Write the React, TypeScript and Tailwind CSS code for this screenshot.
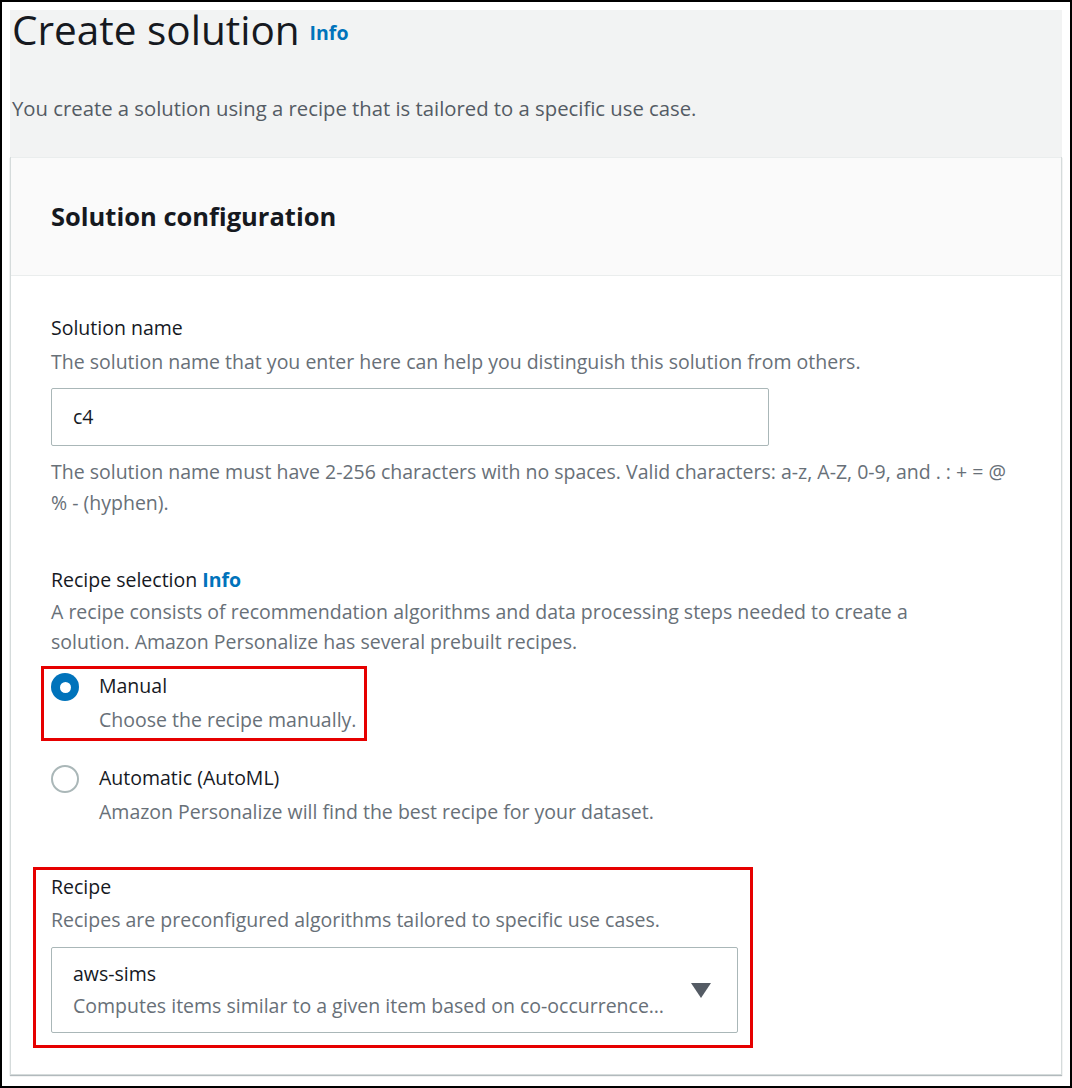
const font = { fontFamily: '"Open Sans", "Liberation Sans", sans-serif' };

const RadioOption = ({ checked, label, hint }: { checked: boolean; label: string; hint: string }) => (
  <div className="flex gap-[20px]">
    <div className="pt-[4px]">
      {checked ? (
        <div className="flex h-[28px] w-[28px] items-center justify-center rounded-full bg-[#0073bb]">
          <div className="h-[11px] w-[11px] rounded-full bg-white" />
        </div>
      ) : (
        <div className="h-[28px] w-[28px] rounded-full border-2 border-[#aab7b8] bg-white" />
      )}
    </div>
    <div className="flex flex-col">
      <span className="text-[19.5px] leading-[34px] text-[#16191f]">{label}</span>
      <span className="text-[19.5px] leading-[33px] text-[#687078]">{hint}</span>
    </div>
  </div>
);

export default function App() {
  return (
    <div style={font} className="box-border h-[1088px] w-[1072px] overflow-hidden border-2 border-black bg-white p-2">
      <div className="flex h-[147px] flex-col bg-[#f2f3f3] pl-[2px]">
        <div className="-mt-[8px] flex items-center gap-[10px]">
          <h1 className="text-[40.5px] leading-[56px] font-normal text-[#16191f]">Create solution</h1>
          <a className="pt-[6px] text-[19.5px] font-bold text-[#0073bb]">Info</a>
        </div>
        <p className="mt-[36px] text-[20.3px] leading-[28px] text-[#545b64]">
          You create a solution using a recipe that is tailored to a specific use case.
        </p>
      </div>

      <section className="h-[918px] border-r border-l border-b border-[#d5dbdb] bg-white shadow-[0_1px_1px_rgba(0,28,36,0.3)]">
        <div className="flex h-[119px] items-center border-t border-b border-[#eaeded] bg-[#fafafa] px-[40px]">
          <h2 className="text-[25.5px] font-bold text-[#16191f]">Solution configuration</h2>
        </div>

        <div className="flex flex-col px-[40px] pt-[35px]">
          <div className="flex flex-col">
            <label className="text-[19.5px] leading-[34px] text-[#16191f]">Solution name</label>
            <span className="text-[19.5px] leading-[34px] text-[#687078]">
              The solution name that you enter here can help you distinguish this solution from others.
            </span>
            <div className="mt-[9px] flex h-[58px] w-[718px] items-center rounded-[2px] border border-[#aab7b8] px-[21px] text-[19.5px] text-[#16191f]">
              c4
            </div>
            <p className="mt-[10px] text-[19.5px] leading-[31px] text-[#687078]">
              The solution name must have 2-256 characters with no spaces. Valid characters: a-z, A-Z, 0-9, and . : + = @ % - (hyphen).
            </p>
          </div>

          <div className="mt-[45px] flex flex-col">
            <label className="text-[19.5px] leading-[34px] text-[#16191f]">
              Recipe selection <a className="font-bold text-[#0073bb]">Info</a>
            </label>
            <p className="w-[900px] text-[19.5px] leading-[30px] text-[#687078]">
              A recipe consists of recommendation algorithms and data processing steps needed to create a solution. Amazon Personalize has several prebuilt recipes.
            </p>

            <div className="mt-[9px] -ml-[10px] w-fit border-[3px] border-[#e60000] pr-[8px] pb-[2px] pl-[7px]">
              <RadioOption checked label="Manual" hint="Choose the recipe manually." />
            </div>
            <div className="mt-[20px]">
              <RadioOption checked={false} label="Automatic (AutoML)" hint="Amazon Personalize will find the best recipe for your dataset." />
            </div>
          </div>

          <div className="mt-[39px] -ml-[18px] w-[720px] border-[3px] border-[#e60000] pt-[2px] pb-[12px] pl-[15px]">
            <label className="block text-[19.5px] leading-[30px] text-[#16191f]">Recipe</label>
            <span className="block text-[19.5px] leading-[36px] text-[#687078]">
              Recipes are preconfigured algorithms tailored to specific use cases.
            </span>
            <div className="mt-[9px] flex h-[86px] w-[687px] items-center rounded-[2px] border border-[#aab7b8] pr-[26px] pl-[21px]">
              <div className="flex min-w-0 flex-1 flex-col">
                <span className="text-[19.5px] leading-[32px] text-[#16191f]">aws-sims</span>
                <span className="whitespace-nowrap text-[19.5px] leading-[32px] text-[#687078]">
                  Computes items similar to a given item based on co-occurrence…
                </span>
              </div>
              <svg width="20" height="15" viewBox="0 0 20 15" className="ml-[16px] shrink-0">
                <path d="M0 0 H20 L10 15 Z" fill="#545b64" />
              </svg>
            </div>
          </div>
        </div>
      </section>
    </div>
  );
}
